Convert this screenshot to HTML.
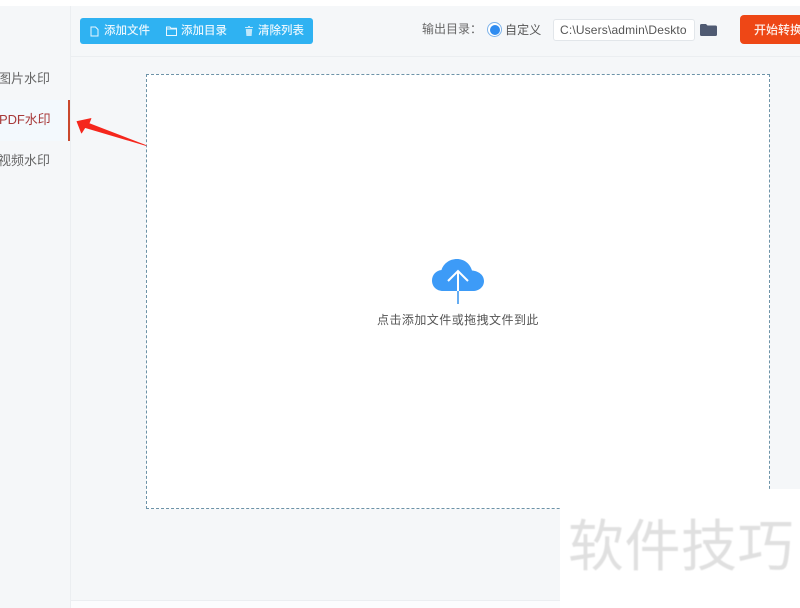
<!DOCTYPE html>
<html lang="zh">
<head>
<meta charset="utf-8">
<style>
html,body{margin:0;padding:0}
body{width:800px;height:608px;overflow:hidden;position:relative;background:#fff;font-family:"Liberation Sans","Noto Sans CJK SC",sans-serif;color:#555}
div,span{position:absolute;white-space:nowrap}
.t{font-size:12px;line-height:16px;filter:blur(.3px)}
svg{position:absolute;overflow:visible}
</style>
</head>
<body>
<div style="left:0;top:6px;width:800px;height:602px;background:#f5f7f9"></div>
<div style="left:70px;top:6px;width:1px;height:602px;background:#ebeef1"></div>
<div style="left:71px;top:56px;width:729px;height:1px;background:#ebeef1"></div>
<div style="left:71px;top:600px;width:729px;height:1px;background:#ebeef1"></div>
<div style="left:71px;top:601px;width:729px;height:7px;background:#fbfcfd"></div>

<div class="t" style="left:-2px;top:71px;font-size:13px;color:#666">图片水印</div>
<div style="left:0;top:100px;width:68px;height:41px;background:#f3f9fd"></div>
<div style="left:68px;top:100px;width:2px;height:41px;background:#c9492e"></div>
<div class="t" style="left:-1px;top:112px;font-size:13px;letter-spacing:-.1px;color:#a83a3a">PDF水印</div>
<div class="t" style="left:-2px;top:153px;font-size:13px;color:#666">视频水印</div>

<div style="left:80px;top:18px;width:233px;height:26px;background:#2fb2f2;border-radius:3px"></div>
<svg style="left:90px;top:26px" width="9" height="11" viewBox="0 0 9 11"><path d="M1 1H5.500L8 3.500V10H1Z" fill="none" stroke="#eaf7fe" stroke-width="1"/></svg>
<div class="t" style="left:104px;top:23px;color:#e8f6fe;font-size:11.500px;font-weight:500">添加文件</div>
<svg style="left:166px;top:26px" width="11" height="10" viewBox="0 0 11 10"><path d="M.5 1H4L5 2.200H10.500V9.500H.5Z M.5 3H10.500" fill="none" stroke="#eaf7fe" stroke-width="1"/></svg>
<div class="t" style="left:181px;top:23px;color:#e8f6fe;font-size:11.500px;font-weight:500">添加目录</div>
<svg style="left:245px;top:26px" width="8" height="10" viewBox="0 0 8 10"><path d="M3 0H5V1H8V2H0V1H3ZM.8 3H7.200L6.600 10H1.400Z" fill="#bfe7fb"/></svg>
<div class="t" style="left:258px;top:23px;color:#e8f6fe;font-size:11.500px;font-weight:500">清除列表</div>

<div class="t" style="left:422px;top:21px;color:#666">输出目录：</div>
<div style="left:487px;top:22px;width:13px;height:13px;border:1px solid #7db3ea;border-radius:50%;background:#fff"></div>
<div style="left:489.500px;top:24.500px;width:10px;height:10px;border-radius:50%;background:#2f8cf0"></div>
<div class="t" style="left:505px;top:22px;color:#555;letter-spacing:.1px">自定义</div>
<div style="left:553px;top:19px;width:140px;height:20px;background:#fff;border:1px solid #e2e6ea;border-radius:3px"></div>
<div class="t" style="left:560px;top:22px;color:#555;letter-spacing:.16px">C:\Users\admin\Deskto</div>
<svg style="left:700px;top:24px" width="17" height="12" viewBox="0 0 17 12"><path d="M0 1.500Q0 0 1.500 0H6L7.500 1.500H15.500Q17 1.500 17 3V10.500Q17 12 15.500 12H1.500Q0 12 0 10.500Z" fill="#4f5a72"/></svg>
<div style="left:740px;top:15px;width:70px;height:29px;background:#ee4716;border-radius:4px"></div>
<div class="t" style="left:754px;top:22px;color:#fdeee8;font-weight:500">开始转换</div>

<div style="left:146px;top:74px;width:622px;height:433px;background:#fff;border:1px dashed #6d93a8"></div>

<svg style="left:77px;top:118px" width="70" height="28" viewBox="0 0 70 28"><path d="M0 3.500L14 .5L12 5.500L69 27.500L8 9.500L4.500 15Z" fill="#f5271d" stroke="#f5271d" stroke-width=".8" stroke-linejoin="round"/></svg>

<svg style="left:432px;top:259px" width="52" height="45" viewBox="0 0 52 45"><path d="M11 32C4.500 32 0 27.500 0 21.500C0 16 4 11.500 9.500 11C11.500 4.500 17.500 0 25 0C32 0 38 4.500 40 11.500C46.500 12 52 16 52 22C52 28 47 32 41 32Z" fill="#3d9bf7"/><path d="M26 32V13M16 22L26 12L36 22" fill="none" stroke="#fff" stroke-width="2"/><path d="M26 32V45" stroke="#66adf2" stroke-width="2"/></svg>
<div class="t" style="left:377px;top:312px;color:#555;letter-spacing:.45px">点击添加文件或拖拽文件到此</div>

<div style="left:560px;top:489px;width:240px;height:119px;background:#fff"></div>
<div style="left:568px;top:513px;font-size:56px;line-height:68px;color:#e0e0e0;letter-spacing:.5px;filter:blur(.4px)">软件技巧</div>
</body>
</html>
